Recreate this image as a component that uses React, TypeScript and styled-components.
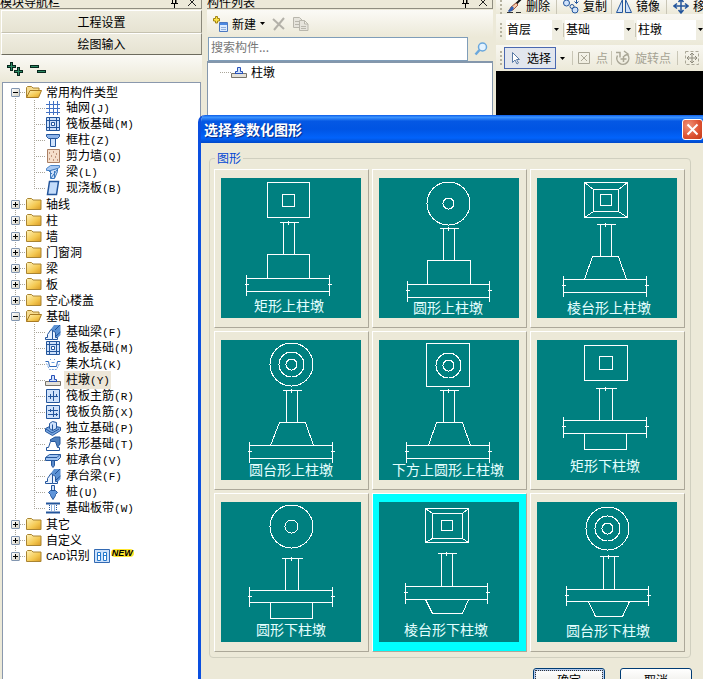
import React, { useState } from 'react';
import styled, { createGlobalStyle, css } from 'styled-components';

const GlobalStyle = createGlobalStyle`
  * { box-sizing: border-box; }
  html, body { margin: 0; padding: 0; }
  body {
    background: #ece9d8;
    color: #000;
    overflow: hidden;
    font: 12px/16px "Noto Sans CJK SC", sans-serif;
  }
  button, input, select { font: inherit; color: inherit; margin: 0; padding: 0; border: 0; border-radius: 0; background: none; }
  svg { display: block; flex: none; }
  ul { list-style: none; margin: 0; padding: 0; }
`;

const Workspace = styled.div`
  position: relative;
  display: flex;
  height: 100vh;
  overflow: hidden;
  white-space: nowrap;
`;

const PanelHeader = styled.header`
  display: flex;
  align-items: flex-end;
  height: 9px;
  overflow: hidden;
  border-bottom: 1px solid #8f8d80;
  border-right: 1px solid #8f8d80;
  margin-bottom: 1px;
  flex: none;
`;
const PanelTitle = styled.span`
  flex: 1;
  line-height: 12px;
`;
const HeaderButton = styled.button`
  width: 18px;
  height: 12px;
  display: grid;
  place-items: center;
`;

const Sidebar = styled.nav`
  flex: none;
  width: 202px;
  display: flex;
  flex-direction: column;
`;
const ModuleButton = styled.button<{ $active?: boolean }>`
  height: ${p => (p.$active ? 22 : 23)}px;
  margin-left: 1px;
  border: 1px solid #fff;
  border-right-color: #8a887a;
  border-bottom-color: ${p => (p.$active ? '#6d6b5e' : '#c5c2b0')};
  background: linear-gradient(#efede0, #e6e3d2);
`;
const SideTools = styled.div`
  height: 27px;
  display: flex;
  align-items: center;
  gap: 7px;
  padding-left: 7px;
  background: linear-gradient(#fbfaf6, #ece9d8);
`;
const ToolButton = styled.button`
  display: flex;
  align-items: center;
`;

const TreePane = styled.div`
  flex: 1;
  min-height: 0;
  margin: 0 1px 0 2px;
  padding: 1px 0 0 8px;
  background: #fff;
  border: 1px solid #8a98ad;
  border-bottom: 0;
`;
const TreeRow = styled.div`
  display: flex;
  align-items: center;
  height: 16px;
`;
const vLine = 'repeating-linear-gradient(#aaa69a 0 1px, transparent 1px 2px)';
const hLine = 'repeating-linear-gradient(90deg, #aaa69a 0 1px, transparent 1px 2px)';
const ToggleCell = styled.span<{ $edge?: 'first' | 'last' }>`
  width: 9px;
  height: 16px;
  display: grid;
  place-items: center;
  background: ${vLine} 4px ${p => (p.$edge === 'first' ? '8px' : '0')} / 1px ${p => (p.$edge ? '8px' : '16px')} no-repeat;
`;
const Toggle = styled.button`
  width: 9px;
  height: 9px;
  border: 1px solid #8296b0;
  border-radius: 1px;
  background: linear-gradient(135deg, #fff, #d5d1c2);
  display: grid;
  place-items: center;
`;
const Dash = styled.span`
  width: 6px;
  height: 1px;
  background: ${hLine};
`;
const Rail = styled.span`
  width: 19px;
  height: 16px;
  margin-left: 4px;
  background: ${vLine} 0 0 / 1px 16px no-repeat;
`;
const Branch = styled.span<{ $last: boolean }>`
  width: 11px;
  height: 16px;
  background: ${vLine} 0 0 / 1px ${p => (p.$last ? 8 : 16)}px no-repeat, ${hLine} 0 8px / 11px 1px no-repeat;
`;
const NodeLabel = styled.span<{ $selected?: boolean }>`
  margin-left: 3px;
  padding: 0 1px 0 2px;
  ${p => p.$selected && css`background: #ece6d8;`}
`;
const Mono = styled.span`
  font-family: "Liberation Mono", monospace;
  font-size: 11px;
`;
const FolderLabel = styled.span` margin-left: 4px; `;
const NewMark = styled.span`
  margin-left: 1px;
  margin-bottom: 6px;
  padding: 0 1px;
  height: 8px;
  font: italic bold 9px/8px "Liberation Sans", sans-serif;
  background: #ffe62e;
  border-radius: 4px;
`;

const ListPanel = styled.section`
  flex: none;
  width: 286px;
  margin-left: 5px;
  display: flex;
  flex-direction: column;
`;
const ListTools = styled.div`
  display: flex;
  align-items: center;
  height: 27px;
  padding-left: 5px;
  gap: 4px;
  background: linear-gradient(#fbfaf6, #ece9d8);
`;
const DisabledIcon = styled.button`
  margin-left: 3px;
`;
const SearchRow = styled.form`
  display: flex;
  height: 24px;
  margin-left: 1px;
`;
const SearchInput = styled.input`
  flex: 1;
  min-width: 0;
  background: #fff;
  border: 1px solid #7f9db9;
  padding: 0 2px 4px;
  &::placeholder { color: #777; opacity: 1; }
`;
const SearchButton = styled.button`
  width: 25px;
  display: grid;
  place-items: center;
`;
const ListTree = styled.ul`
  flex: 1;
  background: #fff;
  border: 1px solid #8497ac;
  border-top-width: 2px;
  padding: 1px 0 0 12px;
`;
const ListDash = styled(Dash)` width: 11px; `;

const Drafting = styled.main`
  flex: 1;
  min-width: 0;
  margin-left: 3px;
  display: flex;
  flex-direction: column;
  overflow: hidden;
`;
const ToolStrip = styled.div<{ $height: number; $end?: boolean }>`
  flex: none;
  display: flex;
  align-items: ${p => (p.$end ? 'flex-end' : 'center')};
  height: ${p => p.$height}px;
  background: linear-gradient(#f8f7f1, #ece9d8);
`;
const Grip = styled.span`
  flex: none;
  width: 2px;
  height: 14px;
  margin: 0 4px;
  background: repeating-linear-gradient(#b5b19f 0 2px, transparent 2px 4px);
`;
const StripButton = styled.button<{ $active?: boolean }>`
  flex: none;
  display: flex;
  align-items: center;
  gap: 4px;
  height: 16px;
  &:disabled { color: #a5a293; }
  ${p => p.$active && css`
    height: 22px;
    gap: 3px;
    padding: 0 4px 0 3px;
    margin-left: -2px;
    border: 1px solid #4a68b0;
    background: #e2e6ee;
  `}
`;
const Divider = styled.span<{ $space: number }>`
  flex: none;
  width: 1px;
  height: 14px;
  margin: 0 ${p => p.$space}px;
  background: #c9c6b6;
`;
const SelectBox = styled.label<{ $width: number }>`
  flex: none;
  display: grid;
  grid-template-columns: 1fr 8px;
  align-items: center;
  width: ${p => p.$width}px;
  height: 20px;
  background: linear-gradient(90deg, #fff calc(100% - 10px), #efede1 calc(100% - 10px));
  svg { grid-area: 1 / 2; pointer-events: none; }
`;
const Select = styled.select`
  grid-area: 1 / 1 / 2 / 3;
  appearance: none;
  height: 20px;
  padding: 0 0 1px 1px;
`;
const ArrowGap = styled.button`
  width: 13px;
  height: 16px;
  display: grid;
  place-items: center;
`;
const Canvas = styled.div`
  flex: 1;
  background: #000;
`;

const Dialog = styled.section`
  position: absolute;
  left: 198px;
  right: 0;
  top: 115px;
  background: #ece9d8;
  border-left: 3px solid #0a4fe0;
  border-radius: 7px 0 0 0;
  overflow: hidden;
`;
const DialogTitle = styled.header`
  display: flex;
  align-items: center;
  height: 28px;
  padding: 0 0 0 4px;
  margin-left: -1px;
  background: linear-gradient(#0a5be8, #3d95ff 8%, #0558e4 22%, #0054e3 50%, #0263fb 82%, #0148c8);
`;
const DialogName = styled.h1`
  flex: 1;
  margin: 0;
  color: #fff;
  font-size: 14px;
  line-height: 20px;
  font-weight: 700;
  text-shadow: 1px 1px 1px #062a86;
`;
const CloseButton = styled.button`
  width: 21px;
  height: 21px;
  border: 1px solid #fff;
  border-radius: 3px;
  background: radial-gradient(circle at 30% 30%, #f09378, #dc5030 60%, #c23c18);
  display: grid;
  place-items: center;
`;
const ShapeGroup = styled.fieldset`
  min-width: 0;
  margin: 7px 12px 0 8px;
  border: 1px solid #d0cfbf;
  border-radius: 4px;
  padding: 3px 5px 5px 4px;
`;
const GroupLegend = styled.legend`
  padding: 0 2px;
  margin-left: 1px;
  color: #0046d5;
`;
const ShapeGrid = styled.div`
  display: grid;
  grid-template-columns: repeat(3, minmax(0, 1fr));
  gap: 3px;
`;
const ShapeButton = styled.button<{ $selected: boolean }>`
  padding: 8px 7px 9px 6px;
  border: 1px solid #fff;
  border-right-color: #aca899;
  border-bottom-color: #aca899;
  background: ${p => (p.$selected ? '#00ffff' : '#ece9d8')};
`;
const ShapeDrawing = styled.svg`
  width: 100%;
  background: #008080;
  fill: none;
  stroke: #fff;
  text {
    fill: #e4ffff;
    stroke: none;
    font-size: 14px;
    text-anchor: middle;
  }
`;
const DialogButtons = styled.footer`
  display: flex;
  justify-content: flex-end;
  gap: 15px;
  padding: 10px 11px;
`;
const PushButton = styled.button<{ $primary?: boolean }>`
  width: 72px;
  height: 23px;
  border: 1px solid #003c74;
  border-radius: 3px;
  background: linear-gradient(#fff, #ecebe5 85%, #d6d0c5);
  ${p => p.$primary && css`
    box-shadow: inset 0 0 0 2px #b5cbef;
    outline: 1px dotted #333;
    outline-offset: -3px;
  `}
`;

/* ---------- small icons ---------- */

const Icon = ({ children, size = 16 }: { children: React.ReactNode; size?: number }) => (
  <svg width={size} height={size} viewBox="0 0 16 16" fill="none" stroke="#24569c" aria-hidden="true">{children}</svg>
);
const Arrow = () => (
  <svg width="5" height="3" viewBox="0 0 5 3" aria-hidden="true"><path d="M0 0h5L2.5 3z" fill="#000" /></svg>
);
const Pin = () => (
  <svg width="9" height="11" viewBox="0 0 9 11" stroke="#000" fill="none" aria-hidden="true"><path d="M2.5 0v6M6 0v6M5.500 0v6M1 6.500h7M4.500 7v4" /></svg>
);
const Cross = () => (
  <svg width="8" height="8" viewBox="0 0 8 8" stroke="#222" aria-hidden="true"><path d="M0 0l8 8M8 0l-8 8" /></svg>
);
const Folder = ({ open }: { open?: boolean }) => (
  <svg width="16" height="16" viewBox="0 0 16 16" aria-hidden="true">
    <defs>
      <linearGradient id="gold" x1="0" y1="0" x2="1" y2="1"><stop stopColor="#fff3b8" /><stop offset=".6" stopColor="#f4c851" /><stop offset="1" stopColor="#d99a24" /></linearGradient>
    </defs>
    {open ? (
      <>
        <path d="M.5 13.500V3.500l1-1h4l1.500 1.500h6v3" fill="#f6dc90" stroke="#a98432" />
        <path d="M.5 13.500l3.500-7h11.500l-3 7z" fill="url(#gold)" stroke="#a87a22" />
      </>
    ) : (
      <path d="M.5 13.500V3.500l1-1h4l1.500 1.500h8v9.500z" fill="url(#gold)" stroke="#a98432" />
    )}
  </svg>
);

const pale = '#cfe2fb';
const beam = (
  <>
    <path d="M4 8l5-7h6.500v10l-4 4H6z" fill="#5b92d4" stroke="none" />
    <path d="M10 6l5-5M11 12l4.500-4" stroke="#1f4f96" />
    <path d="M.5 15.500v-2h2v-3l3.500-5 1.500 1v9z" fill="#e8f2ff" />
    <path d="M7.500 15.500v-9l3 2v5h2v2z" fill="#e8f2ff" />
  </>
);
const pedestal = (
  <>
    <path d="M4.500 9.500v-2h2v-4h3v4h2v2" stroke="#2851b8" fill={pale} />
    <path d="M.5 9.500h15v4H.5z" fill="#e4e1d8" stroke="#77736a" />
    <path d="M4 9.500h8" stroke="#2851b8" />
  </>
);
const glyphs: Record<string, React.ReactNode> = {
  axis: <path d="M4.500 1v14M8.500 1v14M12.500 1v14M1 4.500h14M1 8.500h14M1 12.500h14" stroke="#4372c4" />,
  raft: (
    <>
      <path d="M1.500 1.500h13v13h-13z" fill={pale} />
      <path d="M4.500 2v12M11.500 2v12M2 4.500h12M2 11.500h12" />
      <path d="M6.500 6.500h3v3h-3z" fill="#fff" />
    </>
  ),
  column: <><path d="M1.500 2.500h13v2l-2 2h-9l-2-2z" fill="#8db4ea" /><path d="M5.500 6.500h5v8h-5z" fill={pale} /></>,
  wall: <><path d="M2.500 1.500h12v13h-12z" fill="#f5dfcb" stroke="#a97e63" /><path d="M4 5h1M8 4h1M11 6h1M6 8h1M10 9h1M4 11h1M8 12h1M12 12h1" stroke="#8d5134" /></>,
  girder: <><path d="M1.500 4.500l4-3h9v2l-6 3h-7z" fill="#a9c9f2" stroke="#4f86c8" /><path d="M5.500 14.500v-8l7-2v3l-3 7zM3 6l4 4M6 14l6-8M9.500 14V7" fill={pale} stroke="#3b78bd" /></>,
  slab: <path d="M4.500 1.500h9l-2 13h-9z" fill="#c4dcfb" strokeWidth="1.500" />,
  beam,
  pit: <><path d="M.5 5.500h3l1 5h7l1-5h3" stroke="#2b66b8" /><path d="M1.500 7.500l3 6h7l3-6" stroke="#78a5dc" strokeDasharray="2 1" /><path d="M5 3.500h1M9 3.500h1M6.500 6.500h3" stroke="#6ca0df" /></>,
  pedestal,
  mainBar: <><path d="M1.500 1.500h13v13h-13z" fill={pale} /><path d="M8.500 3v10M3 8.500h10M5.500 6v5M11.500 6v2" /></>,
  negBar: <><path d="M1.500 1.500h13v13h-13z" fill={pale} /><path d="M8.500 3v10M3 6.500h10M3 10.500h10M5.500 5v3M11.500 9v3" /></>,
  footing: <><path d="M.5 8.500l6-3 9 2v3l-8 5-7-4z" fill="#7aa8e2" /><path d="M4.500 3.500l3-2 4 1v6l-4 2-3-2z" fill={pale} /><path d="M7.500 4.500v6M1 9l6 4 7-4" /></>,
  strip: <><path d="M5 4l5-3h5v7l-3 4z" fill="#4f80bd" /><path d="M1.500 14.500v-3h2l2-6h5l2 6h2v3z" fill="#fff" /></>,
  cap: <><path d="M.5 5.500l4-3h11v3l-3 3H.5z" fill="#9fc4f3" /><path d="M1 5.500h11l3-3" /><path d="M6.500 8.500h3v5l-1.500 2-1.500-2z" fill="#5a8bcb" /></>,
  pile: <><path d="M6.500 1.500h3v6h-3z" fill={pale} /><path d="M5.500 6.500h5l2 2-2 2v1l-2.500 4-2.500-4v-1l-2-2z" fill="#5f95da" /></>,
  band: <><path d="M1 3.500h14M1 12.500h14" strokeWidth="2" /><path d="M4.500 5v6M11.500 5v6" strokeDasharray="1 1" /><path d="M6.500 5v6M9.500 5v6" stroke="#8fb4e4" /></>,
  cad: <><path d="M.5 1.500h15v13H.5z" fill={pale} stroke="#3269b2" /><path d="M3.500 4.500h3v8h-3zM9.500 4.500h3v8h-3zM3.500 7.500h3M9.500 7.500h3" fill="#fff" stroke="#2478cc" /></>,
};

/* ---------- navigation tree ---------- */

type Leaf = { name: string; key: string; icon: string };
type Branching = { name: string; children?: Leaf[]; open?: boolean };

const tree: Branching[] = [
  {
    name: '常用构件类型', open: true, children: [
      { name: '轴网', key: 'J', icon: 'axis' },
      { name: '筏板基础', key: 'M', icon: 'raft' },
      { name: '框柱', key: 'Z', icon: 'column' },
      { name: '剪力墙', key: 'Q', icon: 'wall' },
      { name: '梁', key: 'L', icon: 'girder' },
      { name: '现浇板', key: 'B', icon: 'slab' },
    ],
  },
  { name: '轴线' }, { name: '柱' }, { name: '墙' }, { name: '门窗洞' }, { name: '梁' }, { name: '板' }, { name: '空心楼盖' },
  {
    name: '基础', open: true, children: [
      { name: '基础梁', key: 'F', icon: 'beam' },
      { name: '筏板基础', key: 'M', icon: 'raft' },
      { name: '集水坑', key: 'K', icon: 'pit' },
      { name: '柱墩', key: 'Y', icon: 'pedestal' },
      { name: '筏板主筋', key: 'R', icon: 'mainBar' },
      { name: '筏板负筋', key: 'X', icon: 'negBar' },
      { name: '独立基础', key: 'P', icon: 'footing' },
      { name: '条形基础', key: 'T', icon: 'strip' },
      { name: '桩承台', key: 'V', icon: 'cap' },
      { name: '承台梁', key: 'F', icon: 'beam' },
      { name: '桩', key: 'U', icon: 'pile' },
      { name: '基础板带', key: 'W', icon: 'band' },
    ],
  },
  { name: '其它' }, { name: '自定义' }, { name: 'CAD识别' },
];

const NavTree = () => (
  <TreePane>
    <ul>
      {tree.map((node, i) => (
        <li key={node.name}>
          <TreeRow>
            <ToggleCell $edge={i === 0 ? 'first' : i === tree.length - 1 ? 'last' : undefined}>
              <Toggle aria-label={node.name} aria-expanded={!!node.open}>
                <svg width="5" height="5" viewBox="0 0 5 5" stroke="#000"><path d={node.open ? 'M0 2.500h5' : 'M0 2.500h5M2.500 0v5'} /></svg>
              </Toggle>
            </ToggleCell>
            <Dash />
            <Folder open={node.open} />
            {node.name.startsWith('CAD') ? (
              <>
                <FolderLabel><Mono>CAD</Mono>识别</FolderLabel>
                <FolderLabel><Icon>{glyphs.cad}</Icon></FolderLabel>
                <NewMark>NEW</NewMark>
              </>
            ) : (
              <FolderLabel>{node.name}</FolderLabel>
            )}
          </TreeRow>
          {node.children && (
            <ul>
              {node.children.map((leaf, j) => (
                <li key={leaf.name}>
                  <TreeRow>
                    <Rail />
                    <Branch $last={j === node.children!.length - 1} />
                    <Icon>{glyphs[leaf.icon]}</Icon>
                    <NodeLabel $selected={leaf.icon === 'pedestal'}>{leaf.name}<Mono>({leaf.key})</Mono></NodeLabel>
                  </TreeRow>
                </li>
              ))}
            </ul>
          )}
        </li>
      ))}
    </ul>
  </TreePane>
);

/* ---------- parametric shapes ---------- */

type Box = [number, number, number, number];
type Shape = {
  name: string;
  text: [number, number];
  boxes?: Box[];
  circles?: [number, number, number][];
  diagonals?: boolean;
  neck: [number, number, number, number];
  slab: [number, number, number, number];
  pier: [number, number, number, number, number, number];
};

/* neck: left, right, top, bottom; slab: left, right, top, bottom;
   pier: top-left, top-right, bottom-left, bottom-right, top, bottom */
const shapes: Shape[] = [
  { name: '矩形上柱墩', text: [68, 133], boxes: [[46, 4, 88, 39], [61, 16, 73, 28]], neck: [62, 73, 44, 76], slab: [25, 108, 100, 113], pier: [46, 88, 46, 88, 76, 100] },
  { name: '圆形上柱墩', text: [69, 135], circles: [[69, 25, 21], [69, 25, 5]], neck: [64, 75, 50, 82], slab: [28, 110, 106, 119], pier: [48, 91, 48, 91, 82, 106] },
  { name: '棱台形上柱墩', text: [72, 135], boxes: [[47, 4, 90, 39], [56, 11, 81, 33], [63, 16, 74, 27]], diagonals: true, neck: [63, 74, 46, 78], slab: [26, 109, 101, 114], pier: [55, 81, 47, 89, 78, 101] },
  { name: '圆台形上柱墩', text: [70, 135], circles: [[70, 24, 21], [70, 24, 12], [70, 24, 5]], neck: [65, 76, 50, 82], slab: [28, 111, 105, 118], pier: [58, 84, 49, 92, 82, 105] },
  { name: '下方上圆形上柱墩', text: [69, 135], boxes: [[47, 3, 90, 46]], circles: [[69, 25, 12], [69, 25, 5]], neck: [64, 75, 50, 82], slab: [27, 110, 105, 118], pier: [57, 83, 49, 91, 82, 105] },
  { name: '矩形下柱墩', text: [68, 131], boxes: [[47, 5, 90, 40], [62, 16, 75, 29]], neck: [62, 75, 48, 80], slab: [26, 109, 80, 93], pier: [47, 89, 47, 89, 93, 109] },
  { name: '圆形下柱墩', text: [70, 133], circles: [[70, 24, 21], [70, 24, 6]], neck: [64, 77, 56, 88], slab: [28, 111, 88, 100], pier: [49, 91, 49, 91, 100, 116] },
  { name: '棱台形下柱墩', text: [67, 133], boxes: [[46, 6, 89, 40], [53, 11, 83, 36], [62, 18, 73, 28]], diagonals: true, neck: [62, 73, 51, 84], slab: [26, 108, 84, 97], pier: [46, 89, 53, 83, 97, 111] },
  { name: '圆台形下柱墩', text: [71, 134], circles: [[70, 26, 21], [70, 26, 12], [70, 26, 5]], neck: [66, 77, 54, 87], slab: [29, 111, 87, 99], pier: [51, 92, 58, 85, 99, 114] },
];

const ShapePicture = ({ shape }: { shape: Shape }) => {
  const { neck: n, slab: s, pier: p } = shape;
  const mid = Math.floor((n[0] + n[1]) / 2);
  const half = Math.floor((s[2] + s[3]) / 2);
  return (
    <ShapeDrawing viewBox="0 0 140 140">
      <g transform="translate(.5 .5)" shapeRendering="crispEdges">
        {shape.boxes?.map(([l, t, r, b]) => <rect key={l} x={l} y={t} width={r - l} height={b - t} />)}
        {shape.diagonals && shape.boxes && (() => {
          const [[a, b, c, d], [e, f, g, h]] = shape.boxes;
          return <path d={`M${a} ${b}L${e} ${f}M${c} ${b}L${g} ${f}M${a} ${d}L${e} ${h}M${c} ${d}L${g} ${h}`} />;
        })()}
        {shape.circles?.map(([x, y, r]) => <circle key={r} cx={x} cy={y} r={r + 0.5} />)}
        <path d={`M${n[0] - 4} ${n[2]}H${n[1] + 4}M${mid} ${n[2] - 2}v4M${n[0]} ${n[2]}V${n[3]}M${n[1]} ${n[2]}V${n[3]}`} />
        <path d={`M${s[0]} ${s[2]}H${s[1]}M${s[0]} ${s[3]}H${s[1]}M${s[0]} ${s[2] - 4}V${s[3] + 4}M${s[1]} ${s[2] - 4}V${s[3] + 4}M${s[0] - 2} ${half}h4M${s[1] - 2} ${half}h4`} />
        <path d={`M${p[0]} ${p[4]}H${p[1]}L${p[3]} ${p[5]}H${p[2]}z`} />
      </g>
      <text x={shape.text[0]} y={shape.text[1]}>{shape.name}</text>
    </ShapeDrawing>
  );
};

export default function App() {
  const [selected, setSelected] = useState('棱台形下柱墩');
  return (
    <>
      <GlobalStyle />
      <Workspace>
        <Sidebar>
          <PanelHeader>
            <PanelTitle>模块导航栏</PanelTitle>
            <HeaderButton aria-label="固定"><Pin /></HeaderButton>
            <HeaderButton aria-label="关闭"><Cross /></HeaderButton>
          </PanelHeader>
          <ModuleButton>工程设置</ModuleButton>
          <ModuleButton $active>绘图输入</ModuleButton>
          <SideTools>
            <ToolButton aria-label="全部展开">
              <svg width="16" height="16" viewBox="0 0 16 16"><path d="M0 5.500h9M4.500 1v9M7 10.500h9M11.500 6v9" stroke="#07261c" strokeWidth="3" /><path d="M1 5.500h7M4.500 2v7M8 10.500h7M11.500 7v7" stroke="#2c8a63" /></svg>
            </ToolButton>
            <ToolButton aria-label="全部折叠">
              <svg width="16" height="16" viewBox="0 0 16 16"><path d="M0 5.500h9M7 10.500h9" stroke="#07261c" strokeWidth="3" /><path d="M1 5.500h7M8 10.500h7" stroke="#2c8a63" /></svg>
            </ToolButton>
          </SideTools>
          <NavTree />
        </Sidebar>

        <ListPanel>
          <PanelHeader>
            <PanelTitle>构件列表</PanelTitle>
            <HeaderButton aria-label="固定"><Pin /></HeaderButton>
            <HeaderButton aria-label="关闭"><Cross /></HeaderButton>
          </PanelHeader>
          <ListTools>
            <StripButton>
              <Icon>
                <path d="M7.500 6.500h8v9h-8z" fill="#dcebff" stroke="#4c78c0" /><path d="M8 8h7" stroke="#4c88e0" strokeWidth="2" /><path d="M9 11.500h5M9 13.500h5" stroke="#8eaedb" />
                <path d="M3.500.500h2v2h2v2.500h-2v2h-2v-2h-2v-2.500h2z" fill="#ffe64a" stroke="#a38413" />
              </Icon>
              新建
              <Arrow />
            </StripButton>
            <DisabledIcon disabled aria-label="删除">
              <svg width="14" height="14" viewBox="0 0 14 14"><path d="M1 2l11 10M12 1L2 13" stroke="#b3b1a9" strokeWidth="2" /></svg>
            </DisabledIcon>
            <DisabledIcon disabled aria-label="复制">
              <svg width="16" height="16" viewBox="0 0 16 16" fill="#e6e4dc" stroke="#b8b6ac"><path d="M.5 1.500h6l3 3v7h-9z" /><path d="M6.500 4.500h5l3.500 3.500v6.500H6.500zM11.500 4.500v3.500H15M2 5.500h4M2 8.500h4M8 10.500h5M8 12.500h5" /></svg>
            </DisabledIcon>
          </ListTools>
          <SearchRow>
            <SearchInput placeholder="搜索构件..." aria-label="搜索构件" />
            <SearchButton type="button" aria-label="搜索">
              <svg width="14" height="14" viewBox="0 0 14 14" fill="#e4f3ff" stroke="#6aa7dc"><circle cx="8.500" cy="5" r="4" strokeWidth="1.500" /><path d="M5.500 8L1.500 12.500" strokeWidth="2.500" /></svg>
            </SearchButton>
          </SearchRow>
          <ListTree>
            <li>
              <TreeRow>
                <ListDash />
                <Icon>{pedestal}</Icon>
                <FolderLabel>柱墩</FolderLabel>
              </TreeRow>
            </li>
          </ListTree>
        </ListPanel>

        <Drafting>
          <ToolStrip $height={14} $end>
            <Grip />
            <StripButton>
              <Icon><path d="M15 1L8 8" stroke="#111" strokeWidth="2" /><path d="M10 5l2 2-5 5-4 1 2-4z" fill="#f5c9a8" stroke="#a45b43" /><path d="M6 8l2 2-2 3-3 1-1-1z" fill="#2f5fb4" stroke="none" /><path d="M1 14.500h6M10 14.500h5" stroke="#333" /></Icon>
              删除
            </StripButton>
            <Divider $space={6} />
            <StripButton>
              <Icon><circle cx="3.500" cy="5" r="3" fill={pale} /><circle cx="12" cy="12" r="3" fill={pale} /><circle cx="9" cy="8.500" r="2" /><path d="M9 1.500h4.500v4M11.500 3.500l2 2 2-2" /></Icon>
              复制
            </StripButton>
            <Divider $space={4} />
            <StripButton>
              <Icon><path d="M6.500 1.500v13h-6zM9.500 1.500v13h6z" fill={pale} /></Icon>
              镜像
            </StripButton>
            <Divider $space={6} />
            <StripButton>
              <Icon><path d="M8 1v14M1 8h14M5.500 4L8 1l2.500 3M5.500 12L8 15l2.500-3M4 5.500L1 8l3 2.500M12 5.500L15 8l-3 2.500" strokeWidth="1.500" /></Icon>
              移动
            </StripButton>
          </ToolStrip>
          <ToolStrip $height={31}>
            <Grip />
            <SelectBox $width={56}>
              <Select aria-label="楼层" defaultValue="首层"><option>首层</option></Select>
              <Arrow />
            </SelectBox>
            <Divider $space={1} />
            <SelectBox $width={69}>
              <Select aria-label="构件类别" defaultValue="基础"><option>基础</option></Select>
              <Arrow />
            </SelectBox>
            <Divider $space={1} />
            <SelectBox $width={69}>
              <Select aria-label="构件类型" defaultValue="柱墩"><option>柱墩</option></Select>
              <Arrow />
            </SelectBox>
          </ToolStrip>
          <ToolStrip $height={26}>
            <Grip />
            <StripButton $active>
              <Icon><path d="M4.500 2.500v10l2.500-2.500 2 4 1.500-1-2-3.500h3z" fill="#fff" stroke="#5879a5" /></Icon>
              选择
            </StripButton>
            <ArrowGap aria-label="选择方式"><Arrow /></ArrowGap>
            <Divider $space={3} />
            <StripButton disabled>
              <Icon><path d="M2.500 2.500h11v11h-11zM5 5l6 6M11 5l-6 6" stroke="#aaa797" /></Icon>
              点
            </StripButton>
            <Divider $space={3} />
            <StripButton disabled>
              <Icon><path d="M2.500 5.500a6 6 0 1 0 10-1M1 2.500h4v5M8.500 6v6M5.500 9h6M9 1l4 3-4 2" stroke="#aaa797" strokeWidth="1.500" /></Icon>
              旋转点
            </StripButton>
            <Divider $space={6} />
            <StripButton disabled aria-label="布置">
              <Icon><path d="M1.500 1.500h13v13h-13z" stroke="#aaa797" strokeDasharray="3 2" /><path d="M8 3v10M3 8h10M6 5l2-2 2 2M6 11l2 2 2-2M5 6L3 8l2 2M11 6l2 2-2 2" stroke="#8e8b7d" /></Icon>
            </StripButton>
          </ToolStrip>
          <Canvas />
        </Drafting>

        <Dialog role="dialog" aria-labelledby="shape-dialog-title">
          <DialogTitle>
            <DialogName id="shape-dialog-title">选择参数化图形</DialogName>
            <CloseButton aria-label="关闭">
              <svg width="13" height="13" viewBox="0 0 13 13"><path d="M1.500 1.500l10 10M11.500 1.500l-10 10" stroke="#fff" strokeWidth="2" /></svg>
            </CloseButton>
          </DialogTitle>
          <ShapeGroup>
            <GroupLegend>图形</GroupLegend>
            <ShapeGrid>
              {shapes.map(shape => (
                <ShapeButton
                  key={shape.name}
                  $selected={shape.name === selected}
                  aria-pressed={shape.name === selected}
                  onClick={() => setSelected(shape.name)}
                >
                  <ShapePicture shape={shape} />
                </ShapeButton>
              ))}
            </ShapeGrid>
          </ShapeGroup>
          <DialogButtons>
            <PushButton $primary>确定</PushButton>
            <PushButton>取消</PushButton>
          </DialogButtons>
        </Dialog>
      </Workspace>
    </>
  );
}
